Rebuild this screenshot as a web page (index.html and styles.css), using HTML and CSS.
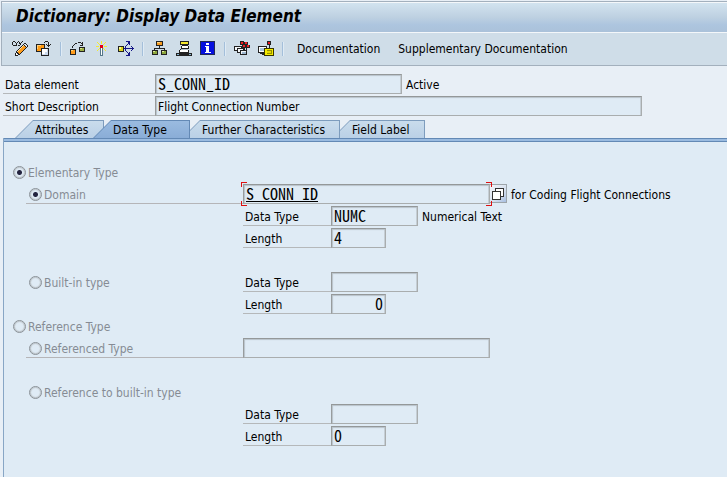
FILE: index.html
```html
<!DOCTYPE html>
<html lang="en">
<head>
<meta charset="utf-8">
<title>Dictionary: Display Data Element</title>
<link rel="stylesheet" href="styles.css">
</head>
<body>
<header class="top">
  <h1 class="title">Dictionary: Display Data Element</h1>
  <nav class="toolbar" aria-label="Application toolbar">
    <button class="tool" aria-label="Display or change"><svg viewBox="0 0 16 16"><path d="M0 1h1v3H0zM1 0h2v1H1zM3 1h1v1H3zM1 4h3v1H1zM4 2h1v3H4zM5 1h1v1H5zM6 0h1v1H6zM7 1h1v2H7zM6 4h2v1H6zM8 2h1v2H8zM9 1h1v1H9zM10 0h1v1h-1z" fill="#222"/><path d="M12 2h2v1h1v1h1v2h-1v1h-1v1h-1v1h-1v1h-1v1h-1v1H9v1H8v1H6v1H3v-3h1v-2h1V9h1V8h1V7h1V6h1V5h1V4h1V3h1z" fill="#222"/><path d="M11 4h1v1h1v1h1v1h-1v1h-1v1h-1v1h-1v1H9v1H8v1H7v-1H6v-1H5v-1h1V9h1V8h1V7h1V6h1V5h1z" fill="#ff9b18"/><path d="M11 4h1v1h-1v1h-1v1H9v1H8v1H7v1H6v1H5v-1h1V9h1V8h1V7h1V6h1V5h1z" fill="#ffe2a0"/><path d="M12 3h2v1h1v2h-1V5h-1V4h-1z" fill="#dfe6ee"/><path d="M4 12h1v1h1v1H4z" fill="#fff"/></svg></button>
    <button class="tool" aria-label="Other object"><svg viewBox="0 0 16 16"><path d="M0 3h9v8H0z" fill="#222"/><path d="M1 4h7v6H1z" fill="#ff9c16"/><path d="M1 4h4v1H2v3H1z" fill="#ffd17b"/><path d="M5 7h8v8H5z" fill="#222"/><path d="M6 8h6v6H6z" fill="#c9d8ec"/><path d="M6 8h5v3H9v2H6z" fill="#fff"/><path d="M8 1h1v1H8zM9 0h3v1H9zM12 1h1v3h-1zM10 3h1v1h-1zM11 4h3v1h-3zM12 5h1v1h-1zM14 3h1v1h-1z" fill="#222"/></svg></button>
    <span class="sep"></span>
    <button class="tool" aria-label="Check"><svg viewBox="0 0 16 16"><path d="M0 8h6v6H0zM9 6h6v5H9z" fill="#222"/><path d="M1 9h4v4H1z" fill="#ff9b1b"/><path d="M1 9h2v1H1z" fill="#ffd77b"/><path d="M10 7h4v3h-4z" fill="#9caf45"/><path d="M10 7h2v1h-2z" fill="#dce98b"/><path d="M2 5h1v2H2zM3 4h1v1H3zM4 3h1v1H4zM5 2h2v1H5zM8 1h3v1H8zM11 2h1v1h-1zM12 1h1v4h-1zM10 4h2v1h-2z" fill="#222"/></svg></button>
    <button class="tool" aria-label="Activate"><svg viewBox="0 0 16 16"><path d="M7 0h1v3H7zM2 5h3v1H2zM10 5h3v1h-3zM3 1h1v1H3zM4 2h1v1H4zM5 3h1v1H5zM11 1h1v1h-1zM10 2h1v1h-1zM9 3h1v1H9zM5 7h1v1H5zM4 8h1v1H4zM3 9h1v1H3zM9 7h1v1H9zM10 8h1v1h-1zM11 9h1v1h-1z" fill="#f3ec32"/><path d="M6 7h3v8H6z" fill="#56788a"/><path d="M7 7h1v7H7z" fill="#fff"/><path d="M6 4h3v3H6z" fill="#e60012"/></svg></button>
    <button class="tool" aria-label="Where-used list"><svg viewBox="0 0 16 16"><path d="M0 5h6v6H0z" fill="#222"/><path d="M1 6h4v4H1z" fill="#ddd51a"/><path d="M1 6h2v2H1z" fill="#fffb94"/><path d="M6 7h10v1H6zM7 5h1v2H7zM8 4h1v1H8zM9 3h1v1H9zM10 1h1v2h-1zM7 8h1v2H7zM8 10h1v1H8zM9 11h1v1H9zM10 12h1v2h-1zM8 0h4v1H8zM11 1h1v3h-1zM8 14h4v1H8zM11 11h1v3h-1zM13 5h1v1h-1zM14 6h1v1h-1zM14 8h1v1h-1zM13 9h1v1h-1z" fill="#151586"/></svg></button>
    <span class="sep"></span>
    <button class="tool" aria-label="Hierarchy"><svg viewBox="0 0 16 16"><path d="M4 0h7v5H4zM0 9h6v5H0zM9 9h6v5H9zM7 5h1v2h5v2h-1V8H3v1H2V7h5z" fill="#222"/><path d="M5 1h5v3H5z" fill="#f69b20"/><path d="M5 1h3v1H5z" fill="#ffd37a"/><path d="M1 10h4v3H1zM10 10h4v3h-4z" fill="#8ba63d"/><path d="M1 10h2v1H1zM10 10h2v1h-2z" fill="#e4ed9a"/></svg></button>
    <button class="tool" aria-label="Object list"><svg viewBox="0 0 16 16"><path d="M4 0h9v4h-1v1h1v3h-1v1h1v3h3v3H0v-3h3V9h1V8h1V5h1V4H4z" fill="#222"/><path d="M5 1h7v2H5z" fill="#f5e82d"/><path d="M6 5h6v2H6zM4 9h8v2H4z" fill="#fff"/><path d="M5 8h7v1H5z" fill="#aebdca"/><path d="M1 13h2v1h10v-1h2v1H1z" fill="#8cbbd4"/></svg></button>
    <button class="tool" aria-label="Information"><svg viewBox="0 0 16 16"><path d="M0 0h15v14H0z" fill="#222a55"/><path d="M1 1h13v12H1z" fill="#0610df"/><path d="M6 2h3v2H6zM5 5h4v6h2v1H5v-1h1V6H5z" fill="#fff"/></svg></button>
    <span class="sep"></span>
    <button class="tool" aria-label="Append structure"><svg viewBox="0 0 16 16"><g fill="#f4f7fa" stroke="#222"><path d="M.5 5.500h7v4h-7z"/><path d="M3.500 7.500h6v4h-6z"/><path d="M6.500 9.500h6v4h-6z"/></g><path d="M8 11h4v2H8z" fill="#9fb8cf"/><path d="M6 0h4v4H6zM10 1h4v3h-4zM12 4h4v3h-3v2h-1zM8 4h4v3h-1v2h-1V7H8z" fill="#222"/><path d="M7 1h2v2H7zM11 1h2v2h-2zM13 4h2v2h-2zM9 4h2v2H9z" fill="#ef1a20"/></svg></button>
    <button class="tool" aria-label="Field documentation"><svg viewBox="0 0 16 16"><path d="M0 5h9v7H0zM2 12h4v2H4v-1H2z" fill="#222"/><path d="M1 6h7v5H1z" fill="#fff"/><path d="M2 7h5v3H2z" fill="#a8c6df"/><path d="M9 0h4v4h-1v3h-1V4H9z" fill="#222"/><path d="M10 1h2v2h-2z" fill="#e71921"/><path d="M6 7h10v8H6z" fill="#383600"/><path d="M7 8h8v6H7z" fill="#f4eb00"/><path d="M9 9h5v4H9z" fill="#969000"/><path d="M9 10h4v2H9z" fill="#e6dc00"/></svg></button>
    <span class="sep"></span>
    <button class="text-tool">Documentation</button>
    <button class="text-tool">Supplementary Documentation</button>
  </nav>
</header>

<main class="content">
  <div class="row">
    <label class="caption" for="element">Data element</label>
    <input class="field mono name" id="element" value="S_CONN_ID" readonly>
    <span class="note">Active</span>
  </div>
  <div class="row">
    <label class="caption" for="description">Short Description</label>
    <input class="field description" id="description" value="Flight Connection Number" readonly>
  </div>

  <div class="tabs" role="tablist">
    <button class="tab first" role="tab" aria-selected="false">Attributes</button>
    <button class="tab active" role="tab" aria-selected="true">Data Type</button>
    <button class="tab third" role="tab" aria-selected="false">Further Characteristics</button>
    <button class="tab fourth" role="tab" aria-selected="false">Field Label</button>
  </div>

  <section class="panel" role="tabpanel">
    <div class="row group"><input type="radio" id="elementary" name="kind" checked disabled><label for="elementary">Elementary Type</label></div>
    <div class="row">
      <div class="option lined"><input type="radio" id="domain" name="source" checked disabled><label for="domain">Domain</label></div>
      <div class="focused"><input class="field mono wide linked" aria-label="Domain name" value="S_CONN_ID" readonly><i class="corner tl"></i><i class="corner tr"></i><i class="corner bl"></i><i class="corner br"></i></div>
      <button class="help" aria-label="Possible entries"><svg viewBox="0 0 12 12"><path d="M3.500 .5h8v8h-8z" fill="#fff" stroke="#333"/><path d="M.5 3.500h8v8h-8z" fill="#fff" stroke="#333"/></svg></button>
      <span class="note">for Coding Flight Connections</span>
    </div>
    <div class="row">
      <div class="option"></div>
      <label class="attribute" for="type1">Data Type</label><input class="field mono type" id="type1" value="NUMC" readonly>
      <span class="note">Numerical Text</span>
    </div>
    <div class="row spaced">
      <div class="option"></div>
      <label class="attribute" for="length1">Length</label><input class="field mono length" id="length1" value="4" readonly>
    </div>
    <div class="row">
      <div class="option"><input type="radio" id="builtin" name="source" disabled><label for="builtin">Built-in type</label></div>
      <label class="attribute" for="type2">Data Type</label><input class="field mono type" id="type2" readonly>
    </div>
    <div class="row">
      <div class="option"></div>
      <label class="attribute" for="length2">Length</label><input class="field mono length number" id="length2" value="0" readonly>
    </div>
    <div class="row group"><input type="radio" id="reference" name="kind" disabled><label for="reference">Reference Type</label></div>
    <div class="row spaced">
      <div class="option lined"><input type="radio" id="referenced" name="source" disabled><label for="referenced">Referenced Type</label></div>
      <input class="field mono wide" aria-label="Referenced type name" readonly>
    </div>
    <div class="row">
      <div class="option"><input type="radio" id="refbuiltin" name="source" disabled><label for="refbuiltin">Reference to built-in type</label></div>
    </div>
    <div class="row">
      <div class="option"></div>
      <label class="attribute" for="type3">Data Type</label><input class="field mono type" id="type3" readonly>
    </div>
    <div class="row">
      <div class="option"></div>
      <label class="attribute" for="length3">Length</label><input class="field mono length" id="length3" value="0" readonly>
    </div>
  </section>
</main>
</body>
</html>
```
FILE: styles.css
```css
* { box-sizing: border-box; }

body {
  margin: 0;
  min-height: 100vh;
  display: flex;
  flex-direction: column;
  background: #e8eff6;
  color: #000;
  font: 12px/18px "DejaVu Sans Condensed", "Noto Sans", sans-serif;
}

button, input { margin: 0; font: inherit; color: inherit; }
button { padding: 0; border: 0; background: none; }

.top {
  margin: 1px 0 0 1px;
  border: solid #a3b0bd;
  border-width: 1px 0 1px 1px;
}

.title {
  height: 31px;
  margin: 0;
  padding-left: 14px;
  border: solid #f4f7fa;
  border-width: 1px 0;
  background: linear-gradient(#d2e3ef, #bdd0e1 50%, #adc5df 75%, #abc2da);
  font-size: 17px;
  font-weight: bold;
  font-style: italic;
  line-height: 26px;
}

.toolbar {
  height: 32px;
  display: flex;
  align-items: center;
  gap: 8px;
  padding-left: 10px;
  background: #cfdde8;
}

.tool, .tool svg { display: block; width: 16px; height: 16px; }
.tool svg { shape-rendering: crispEdges; }
.sep { width: 2px; height: 14px; background: linear-gradient(90deg, #a4bfda 50%, #dfebf5 50%); }
.text-tool { margin-left: 5px; }
.text-tool + .text-tool { margin-left: 10px; }

.content {
  flex: 1;
  display: flex;
  flex-direction: column;
  padding: 8px 0 0 3px;
}

.row { display: flex; height: 20px; margin-bottom: 2px; }
.row.spaced { margin-bottom: 24px; }

.caption, .attribute {
  width: 152px;
  padding-left: 2px;
  border-bottom: 1px solid #b5b8ba;
  line-height: 22px;
}
.attribute { width: 88px; }

.note { margin-left: 4px; line-height: 22px; }

.field {
  height: 20px;
  padding: 1px 2px 0;
  border: 1px solid #a9adae;
  border-top-color: #949899;
  border-left-color: #989c9d;
  border-radius: 0;
  background: #dfebf5;
  box-shadow: inset 1px 1px 1px #b9c3ca, inset -1px 0 0 #c5ced5;
  outline: none;
}

.mono { padding: 0 2px 2px; font-family: "Noto Sans Mono CJK JP", "DejaVu Sans Mono", monospace; font-size: 16px; }
.name { width: 247px; }
.description { width: 487px; }
.wide { display: block; width: 247px; }
.type { width: 87px; }
.length { width: 55px; }
.number { text-align: right; }
.linked { text-decoration: underline; text-decoration-thickness: 1px; text-decoration-skip-ink: none; }

.tabs { display: flex; height: 18px; margin-top: 2px; padding-left: 12px; }

.tab {
  position: relative;
  z-index: 1;
  height: 18px;
  padding: 0 0 0 20px;
  background: #7d9cbd;
  clip-path: polygon(0 100%, 18px 0, 100% 0, 100% 100%);
  text-align: left;
  line-height: 20px;
}

.tab::before {
  content: "";
  position: absolute;
  z-index: -1;
  inset: 1px 1px 0 1px;
  background: linear-gradient(#c9dcec, #bad0e6);
  clip-path: polygon(0 100%, 17px 0, 100% 0, 100% 100%);
}

.first { width: 89px; z-index: 2; }
.active { width: 97px; z-index: 3; margin-left: -11px; background: #6389b5; }
.active::before { background: linear-gradient(#9abbe0, #8aadd7); }
.third { width: 158px; z-index: 2; margin-left: -8px; }
.fourth { width: 93px; margin-left: -8px; }

.panel {
  flex: 1;
  padding: 24px 0 20px 9px;
  border-left: 1px solid #88a6c5;
  background: linear-gradient(#6389b5 1px, #9abbe0 1px, #9abbe0 3px, #6389b5 3px, #6389b5 4px, #dfebf5 4px);
}

.group, .option { align-items: center; gap: 2px; color: #868b94; line-height: 20px; }
.option {
  display: flex;
  width: 217px;
  height: 20px;
  margin-left: 13px;
  padding: 1px 0 0 3px;
  border-bottom: 1px solid transparent;
}
.group label, .option label { padding-top: 1px; }
.lined { border-bottom-color: #b5b5b8; }

input[type="radio"] {
  appearance: none;
  width: 13px;
  height: 13px;
  border: 1px solid #8b9298;
  border-radius: 50%;
  background: #dfebf5;
  box-shadow: inset 0 0 1px 1px #bdc4c9;
}
input[type="radio"]:checked { background: radial-gradient(circle, #24243f 2px, #dfebf5 3px); }

.focused { position: relative; }
.corner { position: absolute; width: 6px; height: 5px; border: 0 solid #dd1111; }
.tl { top: -2px; left: -2px; border-width: 1px 0 0 1px; }
.tr { top: -2px; right: -2px; border-width: 1px 1px 0 0; }
.bl { bottom: -2px; left: -2px; border-width: 0 0 1px 1px; }
.br { bottom: -2px; right: -2px; border-width: 0 1px 1px 0; }

.help {
  width: 17px;
  height: 19px;
  border: solid #9da5aa;
  border-width: 1px 1px 1px 0;
  background: linear-gradient(135deg, #f2f5fa, #d6e0ee 60%, #a7bfe2);
}
.help svg { display: block; width: 12px; height: 12px; margin: 0 auto; shape-rendering: crispEdges; }
```
